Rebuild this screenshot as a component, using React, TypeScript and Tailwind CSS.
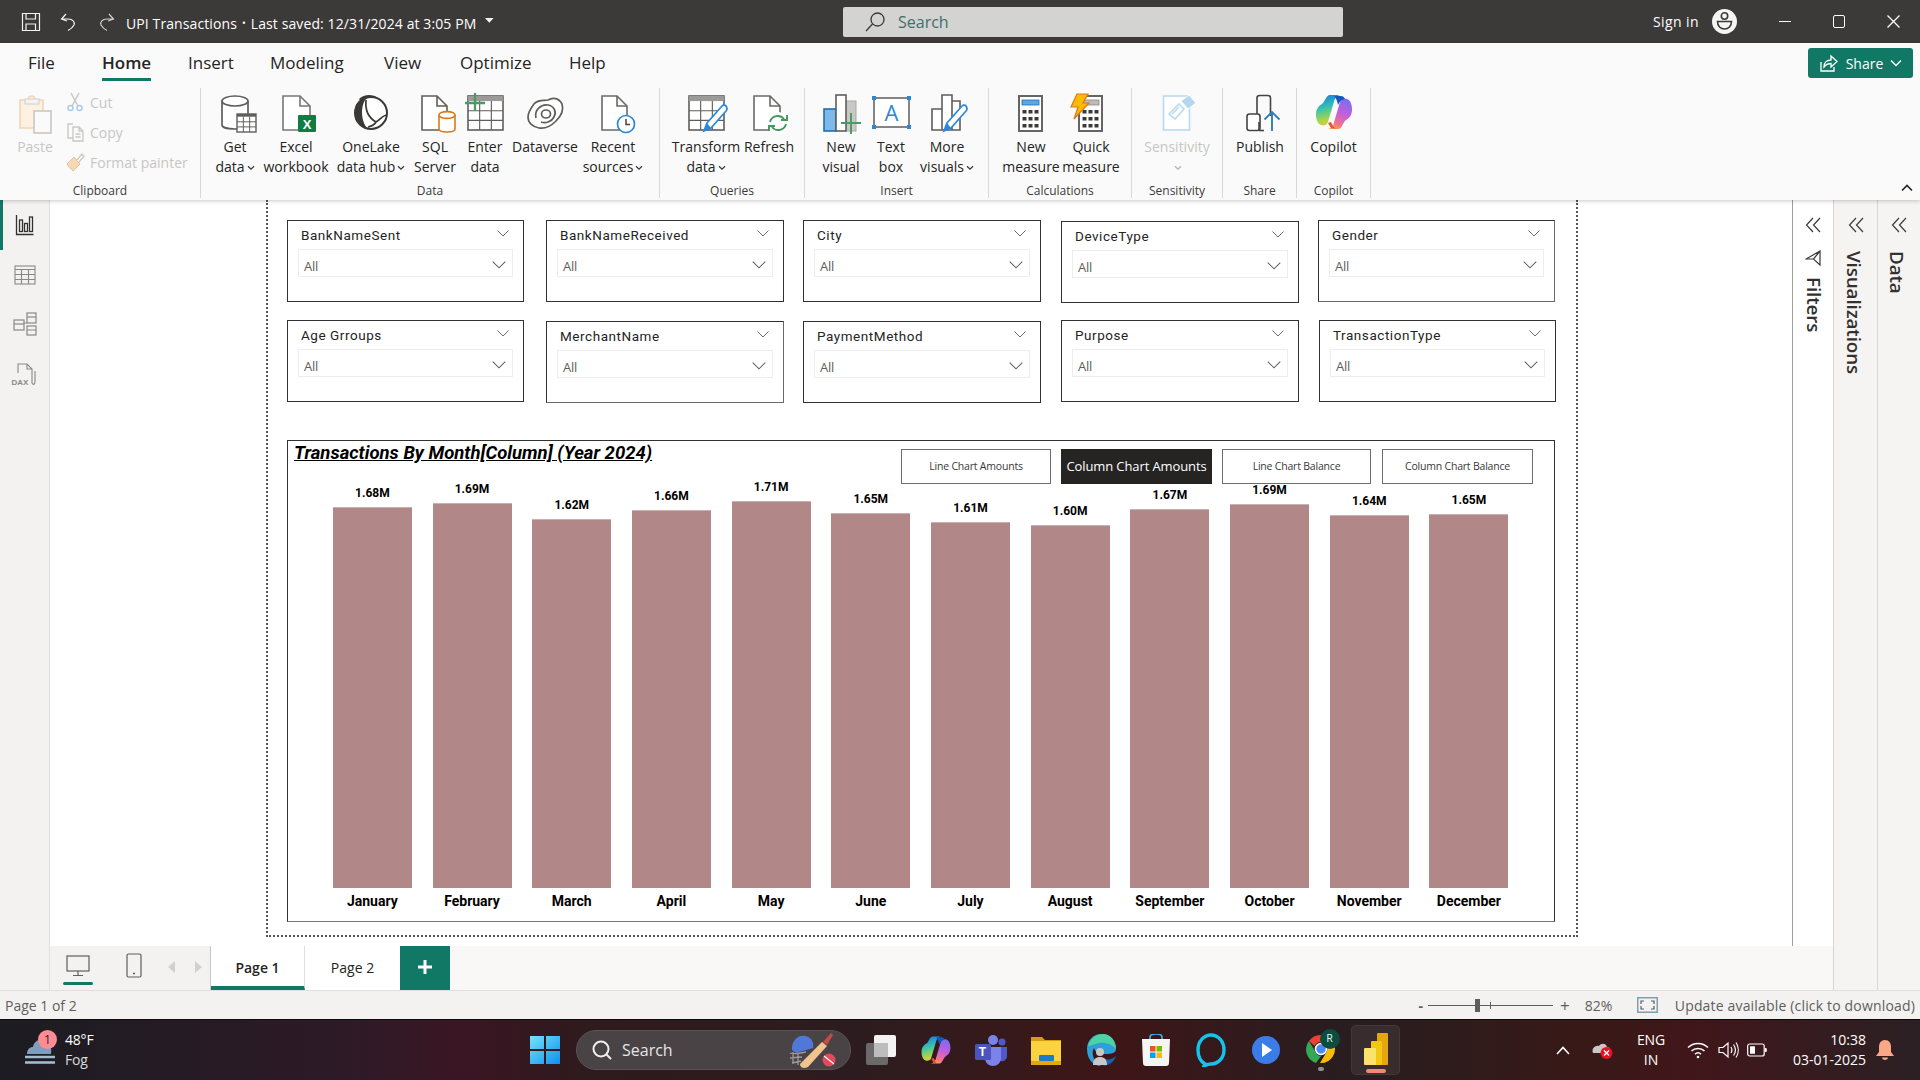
import React from "react";

const UI = "font-['Open_Sans','Noto_Sans',sans-serif]";
const G = "#5f5e5c";

function Svg({ w = 40, h = 40, children, className = "" }: { w?: number; h?: number; children: React.ReactNode; className?: string }) {
  return (
    <svg width={w} height={h} viewBox={`0 0 ${w} ${h}`} fill="none" className={"shrink-0 overflow-visible " + className}>
      {children}
    </svg>
  );
}

const Doc = ({ x, w, c = G }: { x: number; w: number; c?: string }) => (
  <path d={`M${x} 4H${x + w - 10}L${x + w} 14V38H${x}Z M${x + w - 10} 4V14H${x + w}`} stroke={c} strokeWidth="1.6" fill="#fff" />
);

const TableGrid = ({ x, y, w, h, head = "#9b9a98", c = G, sw = 1.6 }: { x: number; y: number; w: number; h: number; head?: string; c?: string; sw?: number }) => {
  const cw = w / 3;
  const ht = h * 0.15;
  const rh = (h - ht) / 3;
  return (
    <g>
      <rect x={x} y={y} width={w} height={h} fill="#fff" stroke={c} strokeWidth={sw} />
      <rect x={x} y={y} width={w} height={ht} fill={head} />
      <path d={`M${x + cw} ${y + ht}V${y + h}M${x + 2 * cw} ${y + ht}V${y + h}M${x} ${y + ht + rh}H${x + w}M${x} ${y + ht + 2 * rh}H${x + w}`} stroke={c} strokeWidth={sw * 0.7} />
    </g>
  );
};

const Pencil = ({ dx = 0, dy = 0 }: { dx?: number; dy?: number }) => (
  <g transform={`translate(${dx} ${dy})`}>
    <path d="M21 31L36 14C37.5 12.5 40 13 40.5 15C41.5 17 41 18 40 19L25 36L18 39Z" fill="#fff" stroke="#2b88d8" strokeWidth="1.7" />
    <path d="M18 39L21 31L25 36Z" fill="#2b88d8" />
  </g>
);

const Sync = ({ x, y, r = 8, c = "#3f9a5c" }: { x: number; y: number; r?: number; c?: string }) => (
  <g stroke={c} strokeWidth="1.9" fill="none">
    <path d={`M${x - r} ${y - 1}A${r} ${r} 0 0 1 ${x + r - 2} ${y - 4}`} />
    <path d={`M${x + r} ${y + 1}A${r} ${r} 0 0 1 ${x - r + 2} ${y + 4}`} />
    <path d={`M${x + r + 1} ${y - 8}V${y - 3}H${x + r - 5}M${x - r - 1} ${y + 8}V${y + 3}H${x - r + 5}`} />
  </g>
);

const GetDataIcon = () => (
  <Svg>
    <path d="M7 9V33C7 35.5 13 37 20 37C27 37 33 35.5 33 33V9" stroke={G} strokeWidth="1.7" fill="#fff" />
    <ellipse cx="20" cy="9" rx="13" ry="5" stroke={G} strokeWidth="1.7" fill="#fff" />
    <TableGrid x={22} y={22} w={19} h={18} head="#5f5e5c" sw={1.4} />
  </Svg>
);
const ExcelIcon = () => (
  <Svg>
    <Doc x={7} w={27} c="#777" />
    <rect x="22" y="23" width="18" height="17" rx="1" fill="#107c41" />
    <text x="31" y="36.5" fontSize="13" fontWeight="700" fill="#fff" textAnchor="middle" fontFamily="Liberation Sans">X</text>
  </Svg>
);
const OneLakeIcon = () => (
  <Svg>
    <circle cx="20" cy="21" r="16" fill="#fff" stroke="#3a3938" strokeWidth="2" />
    <path d="M16 5C9 6 3 12 4 21C4 28 9 34 16 36C11 30 8 15 16 5Z" fill="#3a3938" />
    <path d="M8 7C13 2 22 2 27 6C21 4 15 5 11 11Z" fill="#3a3938" />
    <path d="M15 8C14 18 18 26 25 30C30 27 32 23 36 23M17 35C21 34 24 32 25 30" stroke="#3a3938" strokeWidth="1.7" fill="none" />
  </Svg>
);
const SqlIcon = () => (
  <Svg>
    <Doc x={7} w={25} />
    <path d="M24 23V37C24 39 28 40 32 40C36 40 40 39 40 37V23" fill="#fff" stroke="#d9791e" strokeWidth="1.6" />
    <ellipse cx="32" cy="23" rx="8" ry="3.4" fill="#fff" stroke="#d9791e" strokeWidth="1.6" />
  </Svg>
);
const EnterIcon = () => (
  <Svg>
    <TableGrid x={3} y={4} w={35} h={34} />
    <path d="M0 11H20M10 1V19" stroke="#4a9b62" strokeWidth="2.3" />
  </Svg>
);
const DataverseIcon = () => (
  <Svg>
    <path d="M9 12C13 7 19 9 23 8C28 5 34 6 37 12C39 18 36 24 31 29C26 34 20 37 14 36C8 35 3 31 3 25C3 20 6 16 9 12Z" stroke={G} strokeWidth="1.7" fill="#fff" />
    <path d="M11 26C9 18 16 12 23 13C29 14 32 20 29 25C27 29 21 32 16 30" stroke={G} strokeWidth="1.7" />
    <ellipse cx="21" cy="22" rx="4.500" ry="4" stroke={G} strokeWidth="1.7" />
  </Svg>
);
const RecentIcon = () => (
  <Svg>
    <Doc x={9} w={25} c="#6b6a68" />
    <circle cx="33" cy="32" r="8.500" fill="#fff" stroke="#2b88d8" strokeWidth="1.7" />
    <path d="M33 27V32.500H37" stroke="#444" strokeWidth="1.5" />
  </Svg>
);
const TransformIcon = () => (
  <Svg>
    <TableGrid x={3} y={4} w={35} h={34} />
    <Pencil />
  </Svg>
);
const RefreshIcon = () => (
  <Svg>
    <Doc x={5} w={26} c="#6b6a68" />
    <circle cx="29" cy="31" r="11" fill="#fff" />
    <Sync x={29} y={31} />
  </Svg>
);
const NewVisualIcon = () => (
  <Svg>
    <rect x="3" y="17" width="12" height="22" fill="#7db9eb" stroke="#1f6fb2" strokeWidth="1.6" />
    <rect x="25" y="9" width="10" height="30" fill="#c9c8c6" stroke="#a8a7a5" />
    <rect x="15" y="3" width="10" height="36" fill="#fff" stroke={G} strokeWidth="1.6" />
    <path d="M20 31H40M30 21V42" stroke="#4a9b62" strokeWidth="1.9" />
  </Svg>
);
const TextBoxIcon = () => (
  <Svg>
    <rect x="3" y="6" width="35" height="29" stroke={G} strokeWidth="1.5" fill="#fff" />
    {[[3, 6], [38, 6], [3, 35], [38, 35]].map(([x, y]) => (
      <rect key={x + "-" + y} x={x - 2} y={y - 2} width="4" height="4" fill="#2b88d8" />
    ))}
    <text x="20.500" y="29" fontSize="22" fill="#2b88d8" textAnchor="middle" fontFamily="Open Sans">A</text>
  </Svg>
);
const MoreVisualsIcon = () => (
  <Svg>
    <path d="M5 17H15V3H25V9H33V38H5ZM15 17V38M25 9V38" stroke={G} strokeWidth="1.6" fill="#fff" />
    <Pencil dx={-1} />
  </Svg>
);
const Calc = ({ x, head }: { x: number; head: string }) => (
  <g>
    <rect x={x} y={4} width={23} height={35} fill="#fff" stroke={G} strokeWidth="1.9" />
    <rect x={x + 3} y={8} width={17} height={5} fill={head} stroke={head === "#bdbcba" ? "#8a8886" : "#1f6fb2"} strokeWidth="0.8" />
    {[18, 25, 32].map((y) => [3.5, 9.5, 15.5].map((d) => <rect key={y + "-" + d} x={x + d} y={y} width={4} height={3.500} fill="#3b3a39" />))}
  </g>
);
const NewMeasureIcon = () => <Svg><Calc x={8} head="#5aa7e6" /></Svg>;
const QuickMeasureIcon = () => (
  <Svg>
    <Calc x={8} head="#bdbcba" />
    <path d="M6 2H17L12 11H18L3 27L7 15H0Z" fill="#ffb900" stroke="#d9791e" strokeWidth="1.2" />
  </Svg>
);
const SensitivityIcon = () => (
  <Svg>
    <rect x="6.500" y="4" width="26" height="34" fill="#fff" stroke="#bcdcf0" strokeWidth="1.7" />
    <path d="M12 22L22 12L27 17L18 27Z M15 22L22 15" stroke="#bcdcf0" strokeWidth="1.7" />
    <path d="M24 9L32 3L39 11L31 17Z" fill="#b3d8ee" stroke="#fff" />
  </Svg>
);
const PublishIcon = () => (
  <Svg>
    <path d="M17 22V6C17 4.500 18 3.500 19.500 3.500H28C29.500 3.500 30.500 4.500 30.500 6V24" stroke="#444" strokeWidth="1.6" />
    <path d="M24 38.500H19" stroke="#444" strokeWidth="1.6" />
    <rect x="7" y="22" width="13" height="16.500" rx="2.500" stroke="#444" strokeWidth="1.6" fill="#fff" />
    <path d="M19 30V39" stroke="#444" strokeWidth="1.6" />
    <path d="M32 39V20M24.500 27.500L32 20L39.500 27.500" stroke="#2f7fb5" strokeWidth="1.9" />
  </Svg>
);
const CopilotMark = ({ s = 40 }: { s?: number }) => (
  <svg width={s} height={s} viewBox="0 0 40 40" className="shrink-0">
    <defs>
      <linearGradient id="cpA" x1="0.300" y1="0" x2="0.500" y2="1">
        <stop offset="0" stopColor="#1a7fe0" />
        <stop offset="0.400" stopColor="#35c1b0" />
        <stop offset="0.800" stopColor="#a9d64a" />
        <stop offset="1" stopColor="#f4c542" />
      </linearGradient>
      <linearGradient id="cpB" x1="0.700" y1="0" x2="0.300" y2="1">
        <stop offset="0" stopColor="#7d6cf0" />
        <stop offset="0.450" stopColor="#c15fdc" />
        <stop offset="0.800" stopColor="#f2708f" />
        <stop offset="1" stopColor="#fb9b4a" />
      </linearGradient>
    </defs>
    <path d="M16 3H27C24 3 21.500 5 20.500 8L14 30C13 33 10 34 7 33C4 32 2 28 2 23C2 16 5 14 8 12C11 10 12 3 16 3Z" fill="url(#cpA)" />
    <path d="M24 37H13C16 37 18.500 35 19.500 32L26 10C27 7 30 6 33 7C36 8 38 12 38 17C38 24 35 26 32 28C29 30 28 37 24 37Z" fill="url(#cpB)" />
    <path d="M20 4H27C29 4 30 5 31 7L28 8C26 9 25 11 24 13C23 8 22 6 20 4Z" fill="#1557c0" />
    <path d="M14 31L17 36L24 37C20 37 19 34 17 30Z" fill="#e8552e" />
  </svg>
);

const PasteIcon = () => (
  <Svg w={36} h={40}>
    <path d="M3 8H11C11 5 13 4 14.500 4C16 4 18 5 18 8H26V36H3Z" fill="#fdf1e2" stroke="#f2d6b4" strokeWidth="1.6" />
    <rect x="8" y="7" width="14" height="5" fill="#f4f3f2" stroke="#cfcecd" />
    <rect x="17" y="19" width="17" height="22" fill="#fafafa" stroke="#c8c7c5" strokeWidth="1.6" />
  </Svg>
);
const CutIcon = () => (
  <Svg w={18} h={20}>
    <path d="M5 1L12 14M13 1L6 14" stroke="#c8c7c5" strokeWidth="1.5" />
    <circle cx="4.500" cy="16" r="2.500" stroke="#a9cde6" strokeWidth="1.5" />
    <circle cx="13.500" cy="16" r="2.500" stroke="#a9cde6" strokeWidth="1.5" />
  </Svg>
);
const CopyIcon = () => (
  <Svg w={18} h={20}>
    <path d="M7 2H2V16H7" stroke="#c8c7c5" strokeWidth="1.3" />
    <path d="M7 5H13L17 9V19H7ZM13 5V9H17M9.500 12H14.500M9.500 15H14.500" stroke="#c8c7c5" strokeWidth="1.3" />
  </Svg>
);
const PainterIcon = () => (
  <Svg w={18} h={20}>
    <path d="M1 12L8 5L14 12L7 19C4 16 3 15 1 12Z" fill="#f6d8b8" stroke="#e9bd8f" />
    <path d="M11 8L16 2L18 4L13 10" fill="#fff" stroke="#c8c7c5" strokeWidth="1.3" />
  </Svg>
);

const Caret = ({ c = "#3b3a39" }: { c?: string }) => (
  <svg width="8" height="6" viewBox="0 0 8 6" className="inline-block ml-[2px]">
    <path d="M1 1.200L4 4.200L7 1.200" stroke={c} strokeWidth="1.3" fill="none" />
  </svg>
);

function RibbonBtn({ w, icon, l1, l2, caret, disabled }: { w: number; icon: React.ReactNode; l1: string; l2?: string; caret?: boolean; disabled?: boolean }) {
  return (
    <div className="flex flex-col items-center shrink-0" style={{ width: w }}>
      <div className="h-[40px] w-[40px] flex justify-center shrink-0">{icon}</div>
      <div className={"mt-[5px] text-[14px] leading-[20px] text-center whitespace-nowrap " + (disabled ? "text-[#c8c6c4]" : "text-[#252423]")}>
        <div>{l1}</div>
        <div className="h-[20px]">
          {l2}
          {caret && <Caret c={disabled ? "#b5b3b1" : "#3b3a39"} />}
        </div>
      </div>
    </div>
  );
}

function Group({ w, pl = 0, label, children }: { w: number; pl?: number; label: string; children: React.ReactNode }) {
  return (
    <div className="h-[110px] flex flex-col shrink-0 border-r border-[#d8d7d5]" style={{ width: w }}>
      <div className="flex h-[95px] pt-[4px]" style={{ paddingLeft: pl }}>
        {children}
      </div>
      <div className="h-[15px] text-[12px] leading-[16px] text-center text-[#3b3a39]">{label}</div>
    </div>
  );
}

function ClipRow({ icon, text }: { icon: React.ReactNode; text: string }) {
  return (
    <div className="h-[30px] flex items-center gap-[6px]">
      <div className="w-[18px] flex justify-center">{icon}</div>
      <span className="text-[14px] text-[#c8c6c4] whitespace-nowrap">{text}</span>
    </div>
  );
}

function Ribbon() {
  const tabs: [string, number][] = [["File", 74], ["Home", 86], ["Insert", 82], ["Modeling", 114], ["View", 76], ["Optimize", 109], ["Help", 60]];
  return (
    <div className="h-[157px] bg-[#fafafa] shadow-[0_1px_4px_rgba(0,0,0,0.22)] relative z-10 shrink-0">
      <div className="h-[45px] flex pl-[28px] relative">
        {tabs.map(([t, w]) => (
          <div key={t} className="shrink-0 h-[45px] pt-[7px]" style={{ width: w }}>
            <span className={"inline-block text-[17px] leading-[26px] h-[31px] text-[#252423] " + (t === "Home" ? "font-semibold border-b-[3px] border-[#117865]" : "")}>{t}</span>
          </div>
        ))}
        <div className="ml-auto mr-[7px] mt-[5px] w-[105px] h-[30px] rounded-[3px] bg-[#117865] flex items-center justify-center gap-[7px] text-white text-[14px]">
          <svg width="20" height="20" viewBox="0 0 20 20" fill="none" stroke="#fff" strokeWidth="1.3">
            <path d="M2 9V18H15V14" />
            <path d="M5 14C5 9 8 7 12 7V3L18 8.500L12 14V10.500C9 10.500 7 11.500 5 14Z" />
          </svg>
          <span>Share</span>
          <svg width="12" height="8" viewBox="0 0 12 8" fill="none" stroke="#fff" strokeWidth="1.3"><path d="M1 1.500L6 6.500L11 1.500" /></svg>
        </div>
      </div>
      <div className="flex h-[110px]">
        <Group w={201} label="Clipboard">
          <div className="w-[70px] flex flex-col items-center">
            <div className="h-[45px] w-[36px]"><PasteIcon /></div>
            <span className="text-[14px] leading-[20px] text-[#c8c6c4]">Paste</span>
          </div>
          <div className="flex flex-col ml-[-4px] mt-[-5px]">
            <ClipRow icon={<CutIcon />} text="Cut" />
            <ClipRow icon={<CopyIcon />} text="Copy" />
            <ClipRow icon={<PainterIcon />} text="Format painter" />
          </div>
        </Group>
        <Group w={459} pl={4} label="Data">
          <RibbonBtn w={60} icon={<GetDataIcon />} l1="Get" l2="data" caret />
          <RibbonBtn w={62} icon={<ExcelIcon />} l1="Excel" l2="workbook" />
          <RibbonBtn w={88} icon={<OneLakeIcon />} l1="OneLake" l2="data hub" caret />
          <RibbonBtn w={40} icon={<SqlIcon />} l1="SQL" l2="Server" />
          <RibbonBtn w={60} icon={<EnterIcon />} l1="Enter" l2="data" />
          <RibbonBtn w={60} icon={<DataverseIcon />} l1="Dataverse" />
          <RibbonBtn w={76} icon={<RecentIcon />} l1="Recent" l2="sources" caret />
        </Group>
        <Group w={145} pl={8} label="Queries">
          <RibbonBtn w={76} icon={<TransformIcon />} l1="Transform" l2="data" caret />
          <RibbonBtn w={50} icon={<RefreshIcon />} l1="Refresh" />
        </Group>
        <Group w={184} pl={11} label="Insert">
          <RibbonBtn w={50} icon={<NewVisualIcon />} l1="New" l2="visual" />
          <RibbonBtn w={50} icon={<TextBoxIcon />} l1="Text" l2="box" />
          <RibbonBtn w={62} icon={<MoreVisualsIcon />} l1="More" l2="visuals" caret />
        </Group>
        <Group w={143} pl={12} label="Calculations">
          <RibbonBtn w={60} icon={<NewMeasureIcon />} l1="New" l2="measure" />
          <RibbonBtn w={60} icon={<QuickMeasureIcon />} l1="Quick" l2="measure" />
        </Group>
        <Group w={91} label="Sensitivity">
          <RibbonBtn w={90} icon={<SensitivityIcon />} l1="Sensitivity" caret disabled />
        </Group>
        <Group w={74} label="Share">
          <RibbonBtn w={74} icon={<PublishIcon />} l1="Publish" />
        </Group>
        <Group w={74} label="Copilot">
          <RibbonBtn w={73} icon={<CopilotMark />} l1="Copilot" />
        </Group>
        <div className="ml-auto mr-[7px] mt-[96px]">
          <svg width="12" height="8" viewBox="0 0 12 8" fill="none" stroke="#252423" strokeWidth="1.6"><path d="M1 6.500L6 1.500L11 6.500" /></svg>
        </div>
      </div>
    </div>
  );
}

function TitleBar() {
  return (
    <div className="h-[43px] bg-[#3b3a39] flex items-center text-white shrink-0">
      <div className="w-[22px] ml-[21px]">
        <svg width="20" height="20" viewBox="0 0 20 20" fill="none" stroke="#f3f2f1" strokeWidth="1.2">
          <path d="M1.500 1.500H18.500V18.500H1.500Z" />
          <path d="M5 1.500V7H14.500V1.500M5 18.500V12H14.500V18.500" />
        </svg>
      </div>
      <div className="ml-[16px] w-[20px]">
        <svg width="20" height="20" viewBox="0 0 20 20" fill="none" stroke="#f3f2f1" strokeWidth="1.2">
          <path d="M7 2L2.500 7L8 9M2.500 7H9C14 7 16 10 15 13C14 15 11 17.500 9 18.500" />
        </svg>
      </div>
      <div className="ml-[17px] w-[20px]">
        <svg width="20" height="20" viewBox="0 0 20 20" fill="none" stroke="#d0cfcd" strokeWidth="1.2">
          <path d="M13 2L17.500 7L12 9M17.500 7H11C6 7 4 10 5 13C6 15 9 17.500 11 18.500" />
        </svg>
      </div>
      <div className="ml-[10px] w-[368px] flex items-center text-[14px] whitespace-nowrap tracking-[0.1px] pt-[3px]">
        <span>UPI Transactions</span>
        <span className="mx-[5px] text-[10px]">•</span>
        <span>Last saved: 12/31/2024 at 3:05 PM</span>
        <svg width="12" height="7" viewBox="0 0 12 7" className="ml-[9px] mb-[5px]"><path d="M0 0H12L6 6.500Z" fill="#f3f2f1" /></svg>
      </div>
      <div className="ml-[349px] w-[500px] h-[30px] bg-[#d3d3d1] rounded-[2px] flex items-center pl-[21px]">
        <svg width="22" height="22" viewBox="0 0 22 22" fill="none" stroke="#3b3a39" strokeWidth="1.3">
          <circle cx="13.500" cy="8.500" r="6.500" />
          <path d="M8.500 13L2 20" />
        </svg>
        <span className="ml-[12px] text-[16px] text-[#3f6f6a]">Search</span>
      </div>
      <span className="ml-[310px] text-[14px] tracking-[0.4px]">Sign in</span>
      <div className="ml-[13px] w-[25px] h-[25px] rounded-full bg-[#f5f5f5] flex items-center justify-center">
        <svg width="19" height="21" viewBox="0 0 19 21" fill="none" stroke="#3b3a39" strokeWidth="1.6">
          <circle cx="9.500" cy="5" r="3.200" />
          <path d="M2.500 10.500H16.500C16.500 15 13.500 18 9.500 18C5.500 18 2.500 15 2.500 10.500Z" />
        </svg>
      </div>
      <div className="ml-[42px] w-[12px] h-[1.500px] bg-white" />
      <div className="ml-[42px] w-[12px] h-[13px] border-[1.500px] border-white rounded-[2px]" />
      <svg className="ml-[42px]" width="13" height="13" viewBox="0 0 13 13" stroke="#fff" strokeWidth="1.3"><path d="M.5.500L12.500 12.500M12.500.500L.5 12.500" /></svg>
    </div>
  );
}

function Rail() {
  return (
    <div className="w-[50px] bg-[#f3f2f1] border-r border-[#e1dfdd] flex flex-col shrink-0 h-[790px]">
      <div className="h-[50px] border-l-[3px] border-[#117865] flex items-center justify-center pr-[2px]">
        <svg width="20" height="22" viewBox="0 0 20 22" fill="none" stroke="#323130" strokeWidth="1.3">
          <path d="M1.500 1V20.500H18.500" />
          <rect x="4.500" y="6" width="3" height="11.500" />
          <rect x="9.500" y="9.500" width="3" height="8" />
          <rect x="14.500" y="3" width="3" height="14.500" />
        </svg>
      </div>
      <div className="h-[49px] flex items-center justify-center">
        <svg width="22" height="20" viewBox="0 0 22 20" fill="none" stroke="#8a8886" strokeWidth="1.1">
          <rect x="1" y="1" width="20" height="18" />
          <path d="M1 4.500H21M1 9.500H21M1 14.500H21M7.500 4.500V19M14.500 4.500V19" />
        </svg>
      </div>
      <div className="h-[50px] flex items-center justify-center">
        <svg width="24" height="24" viewBox="0 0 24 24" fill="none" stroke="#8a8886" strokeWidth="1.2">
          <rect x="1" y="8" width="10" height="10" />
          <path d="M1 12H11" />
          <rect x="14" y="1" width="9" height="10" />
          <path d="M14 5H23" />
          <rect x="14" y="14" width="9" height="9" />
          <path d="M14 18H23M11 11H14" />
        </svg>
      </div>
      <div className="h-[52px] flex items-center justify-center">
        <div className="relative w-[24px] h-[24px]">
          <svg width="24" height="24" viewBox="0 0 24 24" fill="none" stroke="#8a8886" strokeWidth="1.100">
            <path d="M5 10V1H14L19 6V20C20 22 22 22 22 18V8M14 1V6H19" />
          </svg>
          <span className="absolute left-[-1px] top-[15px] text-[8px] leading-[9px] font-bold text-[#8a8886] font-['Liberation_Sans',sans-serif] bg-[#f3f2f1]">DAX</span>
        </div>
      </div>
    </div>
  );
}

const Chev = ({ w = 12, c = "#605e5c" }: { w?: number; c?: string }) => (
  <svg width={w} height={Math.round(w * 0.58)} viewBox="0 0 12 7" fill="none" stroke={c} strokeWidth="0.900"><path d="M.5.500L6 6L11.500.500" /></svg>
);

function Slicer({ title, w, ml, mt, heavy }: { title: string; w: number; ml: number; mt: number; heavy?: boolean }) {
  return (
    <div className={"h-[82px] shrink-0 border-[1.500px] border-[#323130] bg-white px-[10px] " + (heavy ? "border-b-[#6b6a68] border-r-[#6b6a68]" : "")} style={{ width: w, marginLeft: ml, marginTop: mt }}>
      <div className="h-[28px] flex items-center justify-between pl-[3px] pr-[4px]">
        <span className="text-[13.500px] tracking-[0.55px] text-[#252423] font-['Roboto',sans-serif] whitespace-nowrap">{title}</span>
        <span className="mb-[4px]"><Chev /></span>
      </div>
      <div className="h-[28px] border border-[#eeedec] flex items-center justify-between pl-[5px] pr-[6px]">
        <span className="text-[13px] text-[#605e5c] tracking-[-0.2px] pt-[7px]">All</span>
        <span className="pt-[3px]"><Chev w={14} /></span>
      </div>
    </div>
  );
}

const row1: [string, number, number, number, boolean?][] = [
  ["BankNameSent", 237, 0, 0],
  ["BankNameReceived", 238, 22, 0],
  ["City", 238, 19, 0],
  ["DeviceType", 238, 20, 1],
  ["Gender", 237, 19, 0, true],
];
const row2: [string, number, number, number, boolean?][] = [
  ["Age Grroups", 237, 0, 0],
  ["MerchantName", 238, 22, 1, true],
  ["PaymentMethod", 238, 19, 1],
  ["Purpose", 238, 20, 0],
  ["TransactionType", 237, 20, 0],
];

const months: [string, string, number][] = [
  ["January", "1.68M", 381],
  ["February", "1.69M", 385],
  ["March", "1.62M", 369],
  ["April", "1.66M", 378],
  ["May", "1.71M", 387],
  ["June", "1.65M", 375],
  ["July", "1.61M", 366],
  ["August", "1.60M", 363],
  ["September", "1.67M", 379],
  ["October", "1.69M", 384],
  ["November", "1.64M", 373],
  ["December", "1.65M", 374],
];

function ChartBtn({ label, active, w, ml }: { label: string; active?: boolean; w: number; ml: number }) {
  return (
    <div
      className={
        "h-[35px] shrink-0 flex items-center justify-center whitespace-nowrap " +
        (active ? "bg-[#252423] text-white text-[13px] tracking-[-0.1px]" : "bg-white border-[1.500px] border-[#6e6d6b] text-[#3b3a39] text-[10.500px] tracking-[-0.2px]")
      }
      style={{ width: w, marginLeft: ml }}
    >
      {label}
    </div>
  );
}

function Chart() {
  const fc = "font-['Roboto',sans-serif]";
  return (
    <div className="w-[1268px] h-[482px] mt-[37px] border-[1.500px] border-[#323130] border-b-[#777] flex flex-col bg-white">
      <div className="h-[45px] flex shrink-0 relative z-10">
        <span className={"ml-[6px] h-[24px] text-[18.500px] leading-[24px] font-bold italic underline text-black whitespace-nowrap " + fc}>
          Transactions By Month[Column] (Year 2024)
        </span>
        <div className="ml-auto mr-[21px] mt-[8px] flex">
          <ChartBtn label="Line Chart Amounts" w={150} ml={0} />
          <ChartBtn label="Column Chart Amounts" active w={151} ml={10} />
          <ChartBtn label="Line Chart Balance" w={149} ml={10} />
          <ChartBtn label="Column Chart Balance" w={151} ml={11} />
        </div>
      </div>
      <div className="flex items-end h-[403px] pl-[34.500px] shrink-0 mt-[-1px] relative z-20">
        {months.map(([m, v, h]) => (
          <div key={m} className="w-[99.700px] shrink-0 flex flex-col items-center">
            <span className={"h-[20px] text-[12px] leading-[20px] font-bold text-black " + fc}>{v}</span>
            <div className="w-[79px] bg-[#b18788] border-t border-[#cbb0b0] mt-[4px]" style={{ height: h }} />
          </div>
        ))}
      </div>
      <div className="flex pl-[34.500px] pt-[4px]">
        {months.map(([m]) => (
          <div key={m} className={"w-[99.700px] shrink-0 text-center text-[14px] leading-[18px] font-bold text-black " + fc}>{m}</div>
        ))}
      </div>
    </div>
  );
}

function Canvas() {
  return (
    <div className="flex-1 h-[745px] bg-white overflow-hidden pl-[216px]">
      <div className="w-[1312px] h-[737px] border-x-2 border-b-2 border-dotted border-[#555] pl-[19px] pt-[20px]">
        <div className="flex">{row1.map(([t, w, ml, mt, hv]) => <Slicer key={t} title={t} w={w} ml={ml} mt={mt} heavy={hv} />)}</div>
        <div className="flex mt-[17px] h-[83px]">{row2.map(([t, w, ml, mt, hv]) => <Slicer key={t} title={t} w={w} ml={ml} mt={mt} heavy={hv} />)}</div>
        <Chart />
      </div>
    </div>
  );
}

const DoubleChev = () => (
  <svg width="16" height="16" viewBox="0 0 16 16" fill="none" stroke="#3b3a39" strokeWidth="1.200"><path d="M8 1L1.500 8L8 15M15 1L8.500 8L15 15" /></svg>
);

function SidePane({ label, w, bg, border, icon, mt, dx }: { label: string; w: number; bg: string; border: string; icon?: boolean; mt: number; dx: number }) {
  return (
    <div className={"flex flex-col items-center shrink-0 pt-[17px] border-l " + bg + " " + border} style={{ width: w }}>
      <DoubleChev />
      {icon && (
        <svg className="mt-[17px]" width="16" height="16" viewBox="0 0 16 16" fill="none" stroke="#3b3a39" strokeWidth="1.200"><path d="M15 1V15L8.500 9H1ZM8.500 9L15 1" /></svg>
      )}
      <span className="[writing-mode:vertical-rl] text-[18.800px] leading-[22px] font-semibold text-[#323130] tracking-[-0.1px]" style={{ marginTop: mt, marginLeft: dx }}>{label}</span>
    </div>
  );
}

function PageTabs() {
  return (
    <div className="h-[44px] flex bg-[#f9f8f7] shrink-0">
      <div className="w-[161px] bg-[#f3f2f1] flex items-start border-r border-[#c8c6c4] relative">
        <div className="ml-[13px] w-[30px] h-[44px] flex flex-col items-center pt-[9px]">
          <svg width="24" height="22" viewBox="0 0 24 22" fill="none" stroke="#605e5c" strokeWidth="1.200">
            <rect x="1" y="1" width="22" height="15" />
            <path d="M12 16V20M7 20.500H17" />
          </svg>
          <div className="w-[30px] h-[3px] bg-[#117865] rounded-[2px] mt-[5px]" />
        </div>
        <svg className="ml-[33px] mt-[7px]" width="16" height="25" viewBox="0 0 16 25" fill="none" stroke="#605e5c" strokeWidth="1.200">
          <rect x="1" y="1" width="14" height="23" rx="1.500" />
          <path d="M7 20.500H9" strokeWidth="1.500" />
        </svg>
        <svg className="ml-[26px] mt-[15px]" width="7" height="12" viewBox="0 0 7 12"><path d="M7 0V12L0 6Z" fill="#d2d0ce" /></svg>
        <svg className="ml-[20px] mt-[15px]" width="7" height="12" viewBox="0 0 7 12"><path d="M0 0V12L7 6Z" fill="#d2d0ce" /></svg>
      </div>
      <div className="w-[94px] bg-white border-b-[4px] border-[#117865] flex items-center justify-center pt-[2px] text-[14px] font-semibold text-[#252423] border-r border-r-[#e1dfdd]">Page 1</div>
      <div className="w-[95px] bg-white flex items-center justify-center text-[14px] text-[#252423] pb-[2px]">Page 2</div>
      <div className="w-[50px] bg-[#117865] flex items-center justify-center pb-[3px]">
        <svg width="14" height="14" viewBox="0 0 14 14" stroke="#fff" strokeWidth="3"><path d="M7 0V14M0 7H14" /></svg>
      </div>
    </div>
  );
}

function StatusBar() {
  return (
    <div className="h-[29px] bg-[#f3f2f1] border-t-[1px] border-[#e1dfdd] flex items-center text-[14px] text-[#605e5c] shrink-0 whitespace-nowrap">
      <span className="ml-[5px]">Page 1 of 2</span>
      <span className="ml-auto font-bold text-[14px]">-</span>
      <div className="ml-[5px] w-[125px] h-[1px] bg-[#605e5c] relative">
        <div className="absolute left-[47px] top-[-6px] w-[5px] h-[13px] bg-[#605e5c]" />
        <div className="absolute left-[62px] top-[-3px] w-[1px] h-[7px] bg-[#605e5c]" />
      </div>
      <span className="ml-[7px] text-[17px] leading-[17px]">+</span>
      <span className="ml-[15px] w-[29px] text-[14px]">82%</span>
      <svg className="ml-[23px]" width="21" height="16" viewBox="0 0 21 16" fill="none">
        <rect x="0.750" y="0.750" width="19.500" height="14.500" stroke="#7f9db5" strokeWidth="1.500" />
        <path d="M7 4H4V7M14 4H17V7M7 12H4V9M14 12H17V9" stroke="#605e5c" strokeWidth="1.200" />
      </svg>
      <span className="ml-[17px] mr-[5px] tracking-[0.17px]">Update available (click to download)</span>
    </div>
  );
}

const Cell = ({ w, mr = 0, children, className = "" }: { w: number; mr?: number; children: React.ReactNode; className?: string }) => (
  <div className={"shrink-0 flex items-center justify-center " + className} style={{ width: w, marginRight: mr }}>{children}</div>
);

function Taskbar() {
  return (
    <div className="h-[61px] shrink-0 border-t border-[#0c0c0c] bg-[linear-gradient(90deg,#1c1c21_0%,#2e1a27_18%,#3a1523_24%,#2f1a1d_30%,#2d1c1f_45%,#3e1617_58%,#281d20_70%,#371917_82%,#41161a_88%,#2b2024_100%)] flex items-center text-white">
      <div className="w-[530px] flex items-center pl-[24px] shrink-0">
        <div className="relative w-[34px] h-[36px]">
          <svg width="32" height="34" viewBox="0 0 32 34" className="mt-[2px]">
            <path d="M3 20C3 14 7 13 9 13C10 7 16 4 21 7C26 9 28 14 27 20Z" fill="#7e9ec0" />
            <path d="M1 23H31M1 28.500H31" stroke="#a5bdd2" strokeWidth="2.500" />
          </svg>
          <div className="absolute left-[14px] top-[-2px] w-[19px] h-[19px] rounded-full bg-[#ff8b94] text-[#222] text-[12px] leading-[19px] text-center">1</div>
        </div>
        <div className="ml-[7px] text-[14px] leading-[20px] tracking-[-0.2px]">
          <div>48°F</div>
          <div className="text-[#d9d9d9]">Fog</div>
        </div>
      </div>
      <svg width="30" height="30" viewBox="0 0 30 30" className="shrink-0">
        <defs>
          <linearGradient id="win" x1="0" y1="0" x2="1" y2="1">
            <stop offset="0" stopColor="#72e4fb" />
            <stop offset="1" stopColor="#0f8fee" />
          </linearGradient>
        </defs>
        <path d="M0 1H14V14H0ZM16 1H30V14H16ZM0 16H14V29H0ZM16 16H30V29H16Z" fill="url(#win)" />
      </svg>
      <div className="ml-[16px] w-[275px] h-[40px] rounded-[20px] bg-[#4a4346] border border-[#5a5356] flex items-center pl-[14px] shrink-0">
        <svg width="22" height="22" viewBox="0 0 22 22" fill="none" stroke="#eee" strokeWidth="2"><circle cx="10" cy="10" r="7.500" /><path d="M15 15L20 20" /></svg>
        <span className="ml-[9px] text-[16px] text-[#e5e5e5]">Search</span>
        <svg className="ml-auto mr-[12px]" width="52" height="38" viewBox="0 0 52 38">
          <path d="M6 19C5 10 12 3 20 5C26 7 28 12 27 17L10 22Z" fill="#4f78d8" />
          <path d="M4 22C8 24 14 22 20 21M4 27L16 26M6 32L15 30M7 21V33M12 22V34" stroke="#999" strokeWidth="1.300" fill="none" />
          <path d="M14 33L36 11L41 15L22 36C18 38 14 37 14 33Z" fill="#efc48e" />
          <path d="M37 11L45 2L47 4L41 14Z" fill="#c64a4a" />
          <circle cx="43" cy="29" r="6.500" fill="#e14a5c" />
          <path d="M38 25L48 33" stroke="#fff" strokeWidth="1.200" />
        </svg>
      </div>
      <div className="ml-[2px] flex shrink-0">
        <Cell w={55}>
          <div className="relative w-[30px] h-[30px]">
            <div className="absolute left-0 top-[8px] w-[22px] h-[22px] bg-[#6a6a6a] rounded-[2px]" />
            <div className="absolute left-[8px] top-0 w-[22px] h-[22px] bg-[#f3f3f3] rounded-[2px]" />
            <div className="absolute left-[8px] top-[8px] w-[14px] h-[14px] bg-[#bdbdbd]" />
          </div>
        </Cell>
        <Cell w={55}><CopilotMark s={32} /></Cell>
        <Cell w={55}>
          <div className="relative w-[32px] h-[32px]">
            <svg width="32" height="32" viewBox="0 0 32 32">
              <circle cx="18" cy="6" r="5" fill="#7b83eb" />
              <circle cx="27" cy="8" r="3.500" fill="#5059c9" />
              <path d="M22 13H32V22C32 26 28 28 25 27Z" fill="#5059c9" />
              <path d="M9 13H26V24C26 29 22 32 18 32C13 32 10 28 10 24Z" fill="#7b83eb" />
              <rect x="0" y="10" width="16" height="16" rx="1.500" fill="#4b53bc" />
            </svg>
            <span className="absolute left-0 top-[10px] w-[16px] text-center text-[12px] leading-[16px] font-bold font-['Liberation_Sans',sans-serif]">T</span>
          </div>
        </Cell>
        <Cell w={55}>
          <svg width="32" height="30" viewBox="0 0 32 30">
            <path d="M1 2H12L15 5H31V12H1Z" fill="#d79c12" />
            <rect x="1" y="6" width="30" height="24" fill="#fbd33e" />
            <rect x="9" y="20" width="15" height="6" rx="1" fill="#1f79c9" />
            <rect x="1" y="26" width="30" height="4" fill="#e5a711" />
          </svg>
        </Cell>
        <Cell w={55}>
          <svg width="32" height="32" viewBox="0 0 32 32">
            <path d="M2 15C2 6 9 0 16 0C24 0 31 6 31 15C31 19 27 20 20 20C14 20 10 18 9 14C6 18 8 28 16 32C8 32 2 25 2 15Z" fill="#2f9fd8" />
            <path d="M3 12C5 4 12 0 18 0C26 0 31 7 31 15C27 10 20 8 14 9C9 10 5 12 3 12Z" fill="#4ad3a4" />
            <path d="M16 32C24 32 29 28 31 22C28 25 24 26 20 25C23 30 20 32 16 32Z" fill="#1464b4" />
            <circle cx="15" cy="18" r="4" fill="#c8c8c8" />
            <path d="M8 31C8 25 11 23 15 23C19 23 22 25 22 31Z" fill="#c8c8c8" />
          </svg>
        </Cell>
        <Cell w={55}>
          <svg width="30" height="32" viewBox="0 0 30 32">
            <path d="M9 6V3C9 1 11 0 15 0C19 0 21 1 21 3V6" fill="none" stroke="#39b0e8" strokeWidth="1.700" />
            <path d="M1 5H29L28 29C28 31 27 32 25 32H5C3 32 2 31 2 29Z" fill="#f5f5f5" />
            <rect x="9" y="12" width="5.500" height="5.500" fill="#f25022" />
            <rect x="15.500" y="12" width="5.500" height="5.500" fill="#7fba00" />
            <rect x="9" y="18.500" width="5.500" height="5.500" fill="#00a4ef" />
            <rect x="15.500" y="18.500" width="5.500" height="5.500" fill="#ffb900" />
          </svg>
        </Cell>
        <Cell w={55}>
          <svg width="30" height="34" viewBox="0 0 30 34" fill="none">
            <path d="M9 31C4 28 2 23 2 17C2 8 8 2 15 2C22 2 28 8 28 17C28 25 22 31 15 31C12 31 10 32 8 33Z" stroke="#13c4ee" strokeWidth="3.400" />
          </svg>
        </Cell>
        <Cell w={55}>
          <svg width="30" height="30" viewBox="0 0 30 30">
            <circle cx="15" cy="15" r="14" fill="#3a7de8" />
            <path d="M11 8L21 15L11 22Z" fill="#fff" />
          </svg>
        </Cell>
        <Cell w={55}>
          <div className="relative w-[32px] h-[44px] flex flex-col items-center">
            <svg width="30" height="30" viewBox="0 0 30 30" className="mt-[6px]">
              <path d="M15 1A14 14 0 0 1 27 8H15A7 7 0 0 0 8.500 12L3 7A14 14 0 0 1 15 1Z" fill="#e94335" />
              <path d="M3 7L9 17A7 7 0 0 0 15 22L10 29A14 14 0 0 1 3 7Z" fill="#34a853" />
              <path d="M27 8A14 14 0 0 1 14 29L20 19A7 7 0 0 0 20 11Z" fill="#fbbc05" />
              <circle cx="15" cy="15" r="5.500" fill="#4c8bf5" stroke="#fff" strokeWidth="1.500" />
            </svg>
            <div className="absolute left-[15px] top-[1px] w-[20px] h-[20px] rounded-full bg-[#0f4b3f] text-[#cfe] text-[10px] leading-[20px] text-center font-['Roboto',sans-serif]">R</div>
            <div className="mt-[3px] w-[6px] h-[4px] rounded-[2px] bg-[#8f8f8f]" />
          </div>
        </Cell>
        <Cell w={55}>
          <div className="w-[49px] h-[50px] rounded-[5px] bg-[#ffffff12] border border-[#ffffff10] flex flex-col items-center pt-[7px]">
            <svg width="24" height="32" viewBox="0 0 24 32">
              <rect x="13" y="0" width="11" height="32" rx="1" fill="#e5a711" />
              <rect x="7" y="8" width="11" height="24" rx="1" fill="#f2c811" />
              <rect x="0" y="15" width="12" height="17" rx="1" fill="#fbe26a" />
            </svg>
            <div className="mt-[4px] w-[20px] h-[4px] rounded-[2px] bg-[#f08a70]" />
          </div>
        </Cell>
      </div>
      <div className="ml-auto flex items-center pr-[22px]">
        <Cell w={30} mr={4}>
          <svg width="14" height="9" viewBox="0 0 14 9" fill="none" stroke="#fff" strokeWidth="1.600"><path d="M1 8L7 1.500L13 8" /></svg>
        </Cell>
        <Cell w={40} mr={4}>
          <svg width="22" height="18" viewBox="0 0 22 18">
            <path d="M2 12C0 7 5 4 8 5C10 2 15 2 16 6C19 6 20 9 19 12Z" fill="#c8c8c8" />
            <circle cx="15.500" cy="12" r="6" fill="#e81123" />
            <path d="M13 9.500L18 14.500M18 9.500L13 14.500" stroke="#fff" strokeWidth="1.400" />
          </svg>
        </Cell>
        <Cell w={50} mr={6}>
          <div className="text-[14px] leading-[20px] text-center tracking-[-0.1px]">
            <div>ENG</div>
            <div>IN</div>
          </div>
        </Cell>
        <Cell w={32}>
          <svg width="22" height="18" viewBox="0 0 22 18" fill="none" stroke="#fff" strokeWidth="1.500">
            <path d="M1 6.500C6.500 1 15.500 1 21 6.500M4.500 10C8 6.500 14 6.500 17.500 10M8 13.200C9.800 11.500 12.200 11.500 14 13.200" />
            <circle cx="11" cy="16" r="1.300" fill="#fff" stroke="none" />
          </svg>
        </Cell>
        <Cell w={28}>
          <svg width="21" height="18" viewBox="0 0 21 18" fill="none" stroke="#fff" strokeWidth="1.200">
            <path d="M1 6.500H5L10 2V16L5 11.500H1Z" />
            <path d="M13 6C14.200 8 14.200 10 13 12M15.500 3.500C18 7 18 11 15.500 14.500M18 1.500C21 6 21 12 18 16.500" />
          </svg>
        </Cell>
        <Cell w={30} mr={4}>
          <svg width="20" height="14" viewBox="0 0 20 14" fill="none">
            <rect x="0.700" y="1" width="16.500" height="12" rx="2" stroke="#fff" strokeWidth="1.200" />
            <rect x="3" y="3.200" width="5" height="7.600" rx="0.500" fill="#fff" />
            <rect x="17.800" y="5" width="2" height="4" rx="1" fill="#fff" />
          </svg>
        </Cell>
        <div className="w-[90px] mr-[6px] text-right text-[14px] leading-[20px] shrink-0">
          <div>10:38</div>
          <div>03-01-2025</div>
        </div>
        <Cell w={26}>
          <svg width="18" height="20" viewBox="0 0 18 20">
            <path d="M9 0C13 0 15 3 15 7V12L18 16H0L3 12V7C3 3 5 0 9 0Z" fill="#f9a785" />
            <path d="M6 17.500H12C12 19 10.500 20 9 20C7.500 20 6 19 6 17.500Z" fill="#f9a785" />
          </svg>
        </Cell>
      </div>
    </div>
  );
}

export default function App() {
  return (
    <div className={"w-[1920px] h-[1080px] flex flex-col overflow-hidden bg-white " + UI}>
      <TitleBar />
      <Ribbon />
      <div className="flex h-[790px] shrink-0">
        <Rail />
        <div className="flex flex-col w-[1783px] shrink-0">
          <div className="flex h-[746px] shrink-0">
            <Canvas />
            <SidePane label="Filters" w={41} bg="bg-white" border="border-[#a19f9d]" icon mt={11} dx={2} />
          </div>
          <PageTabs />
        </div>
        <SidePane label="Visualizations" w={44} bg="bg-[#f5f4f3]" border="border-[#d8d6d4]" mt={18} dx={-4} />
        <SidePane label="Data" w={43} bg="bg-[#f5f4f3]" border="border-[#d8d6d4]" mt={18} dx={-4} />
      </div>
      <StatusBar />
      <Taskbar />
    </div>
  );
}
